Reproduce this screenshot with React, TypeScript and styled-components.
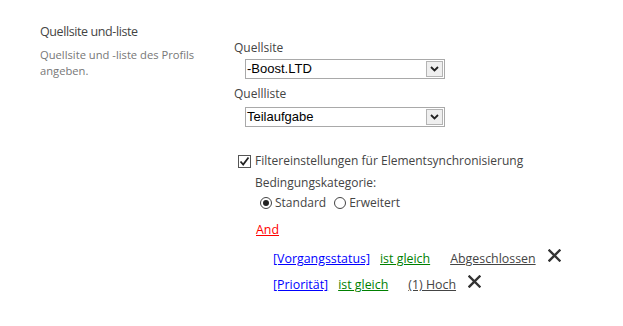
import React from "react";
import styled, { createGlobalStyle } from "styled-components";

const Global = createGlobalStyle`
  html, body { margin: 0; padding: 0; background: #ffffff; }
  body { font-family: "Open Sans", "Noto Sans", sans-serif; color: #444; }
`;

const Page = styled.div`
  display: flex;
  padding: 24px 0 0 40px;
`;

const Side = styled.div`
  width: 194px;
  flex: none;
`;

const SectionTitle = styled.div`
  font-size: 12.5px;
  letter-spacing: -0.4px;
  line-height: 16px;
  color: #444;
`;

const SectionDesc = styled.div`
  margin-top: 7px;
  width: 175px;
  font-size: 11.2px;
  line-height: 16px;
  color: #777;
`;

const Main = styled.div`
  padding-top: 16px;
  display: flex;
  flex-direction: column;
`;

const FieldLabel = styled.div<{ $gap?: number }>`
  font-size: 12px;
  line-height: 16px;
  color: #444;
  margin-top: ${(p) => p.$gap ?? 0}px;
`;

const SelectBox = styled.div<{ $gap?: number }>`
  margin: ${(p) => p.$gap ?? 3}px 0 0 11px;
  width: 200px;
  height: 20px;
  box-sizing: border-box;
  border: 1px solid #a9a9a9;
  display: flex;
  background: #fff;
`;

const SelectText = styled.div`
  flex: 1;
  font-family: "Liberation Sans", Arial, sans-serif;
  font-size: 13px;
  line-height: 18px;
  color: #000;
  padding-left: 1px;
`;

const DropButton = styled.div`
  width: 17px;
  height: 16px;
  margin: 1px 1px 0 0;
  box-sizing: border-box;
  border: 1px solid #b4b4b4;
  background: #efefef;
  display: flex;
  align-items: center;
  justify-content: center;
`;

const CheckRow = styled.label`
  display: flex;
  align-items: center;
  margin: 26px 0 0 4px;
  font-size: 12px;
  line-height: 16px;
  color: #444;
`;

const CheckBox = styled.span`
  width: 13px;
  height: 13px;
  box-sizing: border-box;
  border: 1px solid #555;
  background: #fff;
  margin-right: 4px;
  display: flex;
  align-items: center;
  justify-content: center;
`;

const SubBlock = styled.div`
  margin-left: 21px;
  display: flex;
  flex-direction: column;
`;

const SubLabel = styled.div`
  margin-top: 6px;
  font-size: 12px;
  line-height: 16px;
  color: #444;
`;

const RadioGroup = styled.div`
  display: flex;
  align-items: center;
  margin: 4px 0 0 5px;
  font-size: 12px;
  line-height: 16px;
  color: #444;
`;

const RadioOption = styled.label`
  display: flex;
  align-items: center;
  margin-right: 8px;
`;

const RadioCircle = styled.span<{ $on?: boolean }>`
  width: 12px;
  height: 12px;
  box-sizing: border-box;
  border: 1px solid #444;
  border-radius: 50%;
  margin-right: 3px;
  display: flex;
  align-items: center;
  justify-content: center;
  &::after {
    content: "";
    width: 6px;
    height: 6px;
    border-radius: 50%;
    background: ${(p) => (p.$on ? "#222" : "transparent")};
  }
`;

const AndLink = styled.a`
  margin: 11px 0 0 1px;
  font-size: 12.4px;
  line-height: 16px;
  color: #ff0000;
  text-decoration: underline;
  align-self: flex-start;
`;

const CondList = styled.div`
  margin: 13px 0 0 18px;
  display: flex;
  flex-direction: column;
  gap: 10px;
`;

const CondRow = styled.div`
  display: flex;
  align-items: center;
  font-size: 12.4px;
  line-height: 16px;
`;

const Field = styled.a`
  color: #0000ff;
  text-decoration: underline;
  margin-right: 10px;
`;

const Op = styled.a`
  color: #008000;
  text-decoration: underline;
  margin-right: 20px;
`;

const Val = styled.a`
  color: #444;
  text-decoration: underline;
  margin-right: 12px;
`;

const Remove = styled.span`
  display: inline-flex;
  margin-top: -8px;
`;

const Chevron = () => (
  <svg width="9" height="6" viewBox="0 0 9 6">
    <path d="M1 1 L4.5 4.5 L8 1" fill="none" stroke="#222" strokeWidth="1.8" />
  </svg>
);

const XIcon = () => (
  <svg width="13" height="13" viewBox="0 0 13 13">
    <path d="M1.5 1.5 L11.5 11.5 M11.5 1.5 L1.5 11.5" stroke="#333" strokeWidth="2.4" strokeLinecap="square" />
  </svg>
);

const Select = ({ value, gap }: { value: string; gap?: number }) => (
  <SelectBox $gap={gap}>
    <SelectText>{value}</SelectText>
    <DropButton>
      <Chevron />
    </DropButton>
  </SelectBox>
);

const conditions = [
  { field: "[Vorgangsstatus]", op: "ist gleich", value: "Abgeschlossen" },
  { field: "[Priorität]", op: "ist gleich", value: "(1) Hoch" },
];

export default function App() {
  return (
    <>
      <Global />
      <Page>
        <Side>
          <SectionTitle>Quellsite und-liste</SectionTitle>
          <SectionDesc>Quellsite und -liste des Profils angeben.</SectionDesc>
        </Side>
        <Main>
          <FieldLabel>Quellsite</FieldLabel>
          <Select value="-Boost.LTD" />
          <FieldLabel $gap={7}>Quellliste</FieldLabel>
          <Select value="Teilaufgabe" gap={5} />
          <CheckRow>
            <CheckBox>
              <svg width="11" height="11" viewBox="0 0 11 11">
                <path d="M1.5 5.5 L4.2 8.5 L9.5 1.5" fill="none" stroke="#222" strokeWidth="1.8" />
              </svg>
            </CheckBox>
            Filtereinstellungen für Elementsynchronisierung
          </CheckRow>
          <SubBlock>
            <SubLabel>Bedingungskategorie:</SubLabel>
            <RadioGroup>
              <RadioOption>
                <RadioCircle $on />
                Standard
              </RadioOption>
              <RadioOption>
                <RadioCircle />
                Erweitert
              </RadioOption>
            </RadioGroup>
            <AndLink>And</AndLink>
            <CondList>
              {conditions.map((c) => (
                <CondRow key={c.field}>
                  <Field>{c.field}</Field>
                  <Op>{c.op}</Op>
                  <Val>{c.value}</Val>
                  <Remove>
                    <XIcon />
                  </Remove>
                </CondRow>
              ))}
            </CondList>
          </SubBlock>
        </Main>
      </Page>
    </>
  );
}
